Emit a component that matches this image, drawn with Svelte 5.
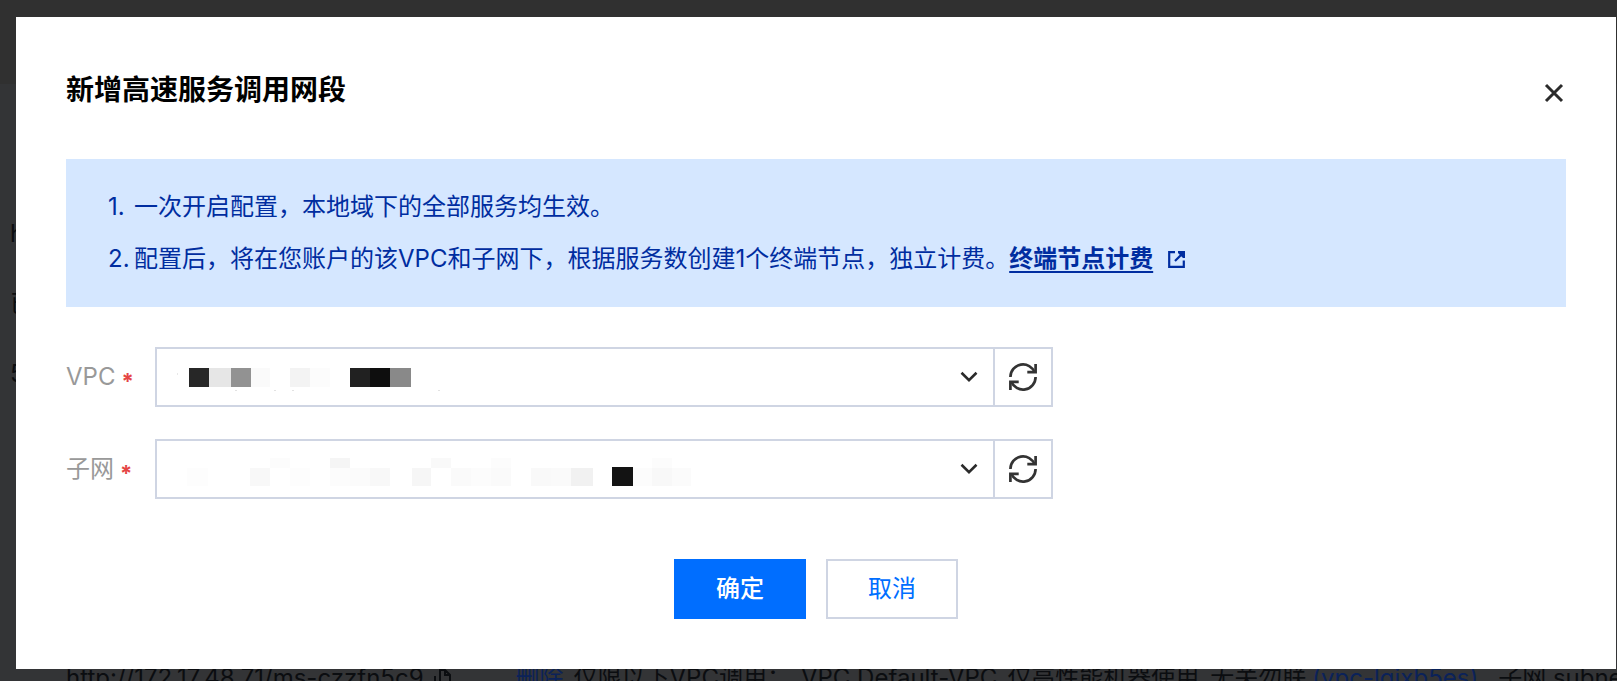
<script>
    const fields = [
        {
            id: 'vpc',
            label: 'VPC',
            // x, y, width, height, fill
            mask: [
                [34, 21, 20, 19, '#272727'],
                [54, 21, 22, 19, '#e6e6e6'],
                [76, 21, 20, 19, '#929292'],
                [96, 21, 19, 19, '#fafafa'],
                [135, 21, 20, 19, '#f3f3f3'],
                [155, 21, 20, 19, '#fcfcfc'],
                [195, 21, 20, 19, '#212121'],
                [215, 21, 20, 19, '#0e0e0e'],
                [235, 21, 21, 19, '#898989'],
                [22, 26, 1, 2, '#e8e8e8'],
                [80, 43, 2, 1, '#e2e2e2'],
                [119, 43, 2, 1, '#e2e2e2'],
                [137, 43, 2, 1, '#e2e2e2'],
                [283, 43, 2, 1, '#e2e2e2'],
            ],
        },
        {
            id: 'subnet',
            label: '子网',
            mask: [
                [32, 29, 21, 18, '#fdfdfd'],
                [95, 29, 20, 18, '#f8f8f8'],
                [115, 19, 20, 10, '#fcfcfc'],
                [135, 29, 20, 18, '#fdfdfd'],
                [175, 19, 20, 10, '#f5f5f5'],
                [175, 29, 20, 18, '#fcfcfc'],
                [195, 29, 20, 18, '#fbfbfb'],
                [215, 29, 20, 18, '#f8f8f8'],
                [257, 29, 19, 18, '#f6f6f6'],
                [276, 19, 20, 10, '#f9f9f9'],
                [296, 29, 20, 18, '#fafafa'],
                [316, 29, 20, 18, '#fcfcfc'],
                [336, 19, 20, 10, '#fcfcfc'],
                [336, 29, 20, 18, '#fafafa'],
                [376, 29, 20, 18, '#f9f9f9'],
                [396, 29, 20, 18, '#fafafa'],
                [416, 29, 22, 18, '#f1f1f1'],
                [457, 28, 21, 19, '#131313'],
                [478, 29, 19, 18, '#fcfcfc'],
                [497, 19, 20, 10, '#fcfcfc'],
                [497, 29, 20, 18, '#f8f8f8'],
                [517, 29, 19, 18, '#fbfbfb'],
            ],
        },
    ]

    let open = $state(true)

    function close() {
        open = false
    }
</script>

<div class="page" lang="zh-CN">
    <div class="topbar"></div>
    <div class="details">
        <span>http</span>
        <span>已开启</span>
        <span>5</span>
    </div>
    <div class="record">
        <span class="address">http://172.17.48.71/ms-czzfn5c9</span>
        <svg class="copy" viewBox="0 0 18 20" width="18" height="20">
            <path d="M6 16V2H11L16 7V16Z M11 2V7H16 M1 8V19H12" fill="none" stroke="currentColor" stroke-width="2" />
        </svg>
        <a class="remove" href="#delete">删除</a>
        <span class="rule">仅限以下VPC调用：</span>
        <span class="vpc-name">VPC Default-VPC_仅高性能机器使用_无关勿联</span>
        <a class="vpc-id" href="#vpc">(vpc-lqixb5es)</a>
        <span>子网 subnet</span>
    </div>
</div>

{#if open}
    <div class="overlay" lang="zh-CN">
        <div class="dialog" role="dialog" aria-modal="true" aria-labelledby="dialog-title">
            <header>
                <h1 id="dialog-title">新增高速服务调用网段</h1>
                <button class="close" type="button" aria-label="关闭" onclick={close}>
                    <svg viewBox="0 0 24 24" width="24" height="24">
                        <path d="M4 4L20 20M20 4L4 20" fill="none" stroke="#2b2b2b" stroke-width="3" />
                    </svg>
                </button>
            </header>

            <ol class="notice">
                <li><span class="num">1.</span><span>一次开启配置，本地域下的全部服务均生效。</span></li>
                <li>
                    <span class="num">2.</span>
                    <span>配置后，将在您账户的该VPC和子网下，根据服务数创建1个终端节点，独立计费。<a href="#pricing">终端节点计费</a></span>
                    <svg class="external" viewBox="0 0 17 17" width="17" height="17">
                        <path d="M7 1.2H1.2V15.8H15.8V9.5" fill="none" stroke="currentColor" stroke-width="2.2" />
                        <path d="M7 10L15 2" fill="none" stroke="currentColor" stroke-width="2.2" />
                        <path d="M10 0H17V7H15L10 2Z" fill="currentColor" />
                    </svg>
                </li>
            </ol>

            <form onsubmit={(e) => e.preventDefault()}>
                {#each fields as field}
                    <div class="field">
                        <label for={field.id}>{field.label}<span class="required">*</span></label>
                        <div class="control">
                            <select id={field.id}><option value=""></option></select>
                            <svg class="mask" viewBox="0 0 560 60" width="560" height="60" shape-rendering="crispEdges">
                                {#each field.mask as [x, y, width, height, fill]}
                                    <rect {x} {y} {width} {height} {fill} />
                                {/each}
                            </svg>
                            <svg class="arrow" viewBox="0 0 18 12" width="18" height="12">
                                <path d="M1.5 1.8L9 9.2L16.5 1.8" fill="none" stroke="#2b2b2b" stroke-width="2.6" />
                            </svg>
                        </div>
                        <button class="refresh" type="button" aria-label="刷新">
                            <svg viewBox="0 0 28 28" width="28" height="28" fill="none" stroke="#333" stroke-width="2.7">
                                <path d="M1.4 14A12.6 12.6 0 0 1 25.8 9.6" />
                                <path d="M18.3 9.1H26.6V1" />
                                <path d="M26.6 14A12.6 12.6 0 0 1 2.2 18.4" />
                                <path d="M9.7 18.9H1.4V27" />
                            </svg>
                        </button>
                    </div>
                {/each}

                <div class="actions">
                    <button class="primary" type="submit">确定</button>
                    <button type="button" onclick={close}>取消</button>
                </div>
            </form>
        </div>
    </div>
{/if}

<style>
    :global(body) {
        margin: 0;
        overflow: hidden;
        background: #323232;
    }

    .page,
    .overlay {
        font-family: Inter, 'Noto Sans CJK SC', sans-serif;
        font-size: 24px;
        line-height: 36px;
    }

    .page {
        height: 100vh;
        overflow: hidden;
        color: #0b0d10;
        background: #333436;
        white-space: nowrap;
    }

    .topbar {
        height: 84px;
        background: #303030;
    }

    .details {
        display: flex;
        flex-direction: column;
        gap: 34px;
        padding: 132px 0 0 10px;
    }

    .record {
        display: flex;
        align-items: center;
        padding: 268px 0 0 66px;
    }

    .record > * {
        flex: none;
    }

    .record a {
        color: #0b2259;
        text-decoration: none;
    }

    .copy {
        margin-left: 10px;
    }

    .remove {
        margin-left: 64px;
    }

    .rule,
    .vpc-name {
        margin-left: 10px;
    }

    .vpc-id {
        margin: 0 20px 0 6px;
    }

    .overlay {
        position: fixed;
        inset: 0;
        box-sizing: border-box;
        padding: 17px 1px 12px 16px;
    }

    .dialog {
        padding: 50px;
        background: white;
    }

    header {
        display: flex;
        align-items: center;
        justify-content: space-between;
        padding-top: 2px;
        margin-bottom: 48px;
    }

    h1 {
        margin: 0;
        font-size: 28px;
        line-height: 42px;
        color: black;
    }

    button {
        display: flex;
        align-items: center;
        justify-content: center;
        box-sizing: border-box;
        border: 2px solid #cfd5e3;
        padding: 0;
        font: inherit;
        color: #006eff;
        background: white;
        cursor: pointer;
    }

    .close {
        border: none;
        padding-top: 6px;
    }

    .notice {
        display: flex;
        flex-direction: column;
        gap: 16px;
        margin: 0 0 40px;
        padding: 30px 42px;
        list-style: none;
        color: #002da0;
        background: #d5e7ff;
    }

    .notice li {
        display: flex;
        align-items: center;
    }

    .num {
        width: 26px;
    }

    .notice a {
        font-weight: bold;
        color: inherit;
        text-decoration: underline;
        text-decoration-thickness: 2px;
        text-underline-offset: 4px;
    }

    .external {
        margin-left: 15px;
    }

    .field {
        display: flex;
        max-width: 987px;
        margin-bottom: 32px;
    }

    label {
        display: flex;
        width: 89px;
        line-height: 60px;
        color: #999;
    }

    .required {
        margin: 4px 0 0 6px;
        font-size: 22px;
        font-weight: bold;
        color: #e54545;
    }

    .control {
        position: relative;
        flex: 1;
    }

    select {
        width: 100%;
        height: 60px;
        box-sizing: border-box;
        border: 2px solid #cfd5e3;
        border-radius: 0;
        padding: 0 20px;
        appearance: none;
        font: inherit;
        background: white;
    }

    .mask,
    .arrow {
        position: absolute;
        pointer-events: none;
    }

    .mask {
        top: 0;
        left: 0;
    }

    .arrow {
        top: 24px;
        right: 17px;
    }

    .field,
    .refresh {
        height: 60px;
    }

    .refresh {
        width: 60px;
        margin-left: -2px;
    }

    .actions {
        display: flex;
        justify-content: center;
        gap: 20px;
        margin-top: 60px;
    }

    .actions button {
        width: 132px;
        height: 60px;
    }

    .actions .primary {
        border-color: #006eff;
        font-weight: 500;
        color: white;
        background: #006eff;
    }
</style>
